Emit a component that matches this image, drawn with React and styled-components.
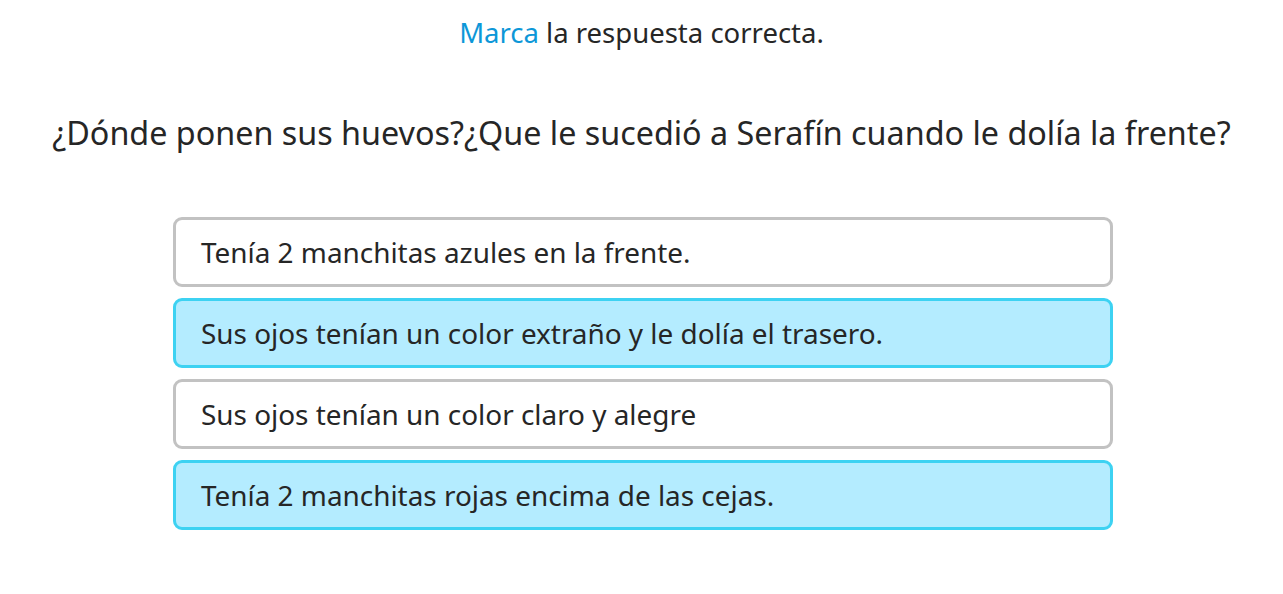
import React from 'react';
import styled, { createGlobalStyle } from 'styled-components';

const GlobalStyle = createGlobalStyle`
  body {
    margin: 0;
    background: #ffffff;
    font-family: "Noto Sans", "Open Sans", sans-serif;
    color: #262626;
  }
`;

const Page = styled.div`
  display: flex;
  flex-direction: column;
  align-items: center;
  padding-top: 14px;
`;

const Instruction = styled.div`
  font-size: 27.5px;
  line-height: 38px;
  color: #262626;
`;

const Highlight = styled.span`
  color: #0d97d8;
`;

const Question = styled.div`
  margin-top: 58px;
  font-size: 32.3px;
  line-height: 44px;
  text-align: center;
  white-space: nowrap;
  color: #262626;
`;

const Options = styled.div`
  margin-top: 63px;
  margin-left: 3px;
  width: 940px;
  display: flex;
  flex-direction: column;
  gap: 11px;
`;

const Option = styled.div`
  box-sizing: border-box;
  height: 70px;
  display: flex;
  align-items: center;
  padding: 0 25px;
  border: 3px solid ${(p) => (p.$selected ? '#3dd2f2' : '#c2c2c2')};
  background: ${(p) => (p.$selected ? '#b4ecff' : '#ffffff')};
  border-radius: 9px;
  font-size: 27.9px;
  color: #262626;
  cursor: pointer;
`;

const answers = [
  { text: 'Tenía 2 manchitas azules en la frente.', selected: false },
  { text: 'Sus ojos tenían un color extraño y le dolía el trasero.', selected: true },
  { text: 'Sus ojos tenían un color claro y alegre', selected: false },
  { text: 'Tenía 2 manchitas rojas encima de las cejas.', selected: true },
];

export default function App() {
  return (
    <>
      <GlobalStyle />
      <Page>
        <Instruction>
          <Highlight>Marca</Highlight> la respuesta correcta.
        </Instruction>
        <Question>¿Dónde ponen sus huevos?¿Que le sucedió a Serafín cuando le dolía la frente?</Question>
        <Options>
          {answers.map((a) => (
            <Option key={a.text} $selected={a.selected}>
              {a.text}
            </Option>
          ))}
        </Options>
      </Page>
    </>
  );
}
